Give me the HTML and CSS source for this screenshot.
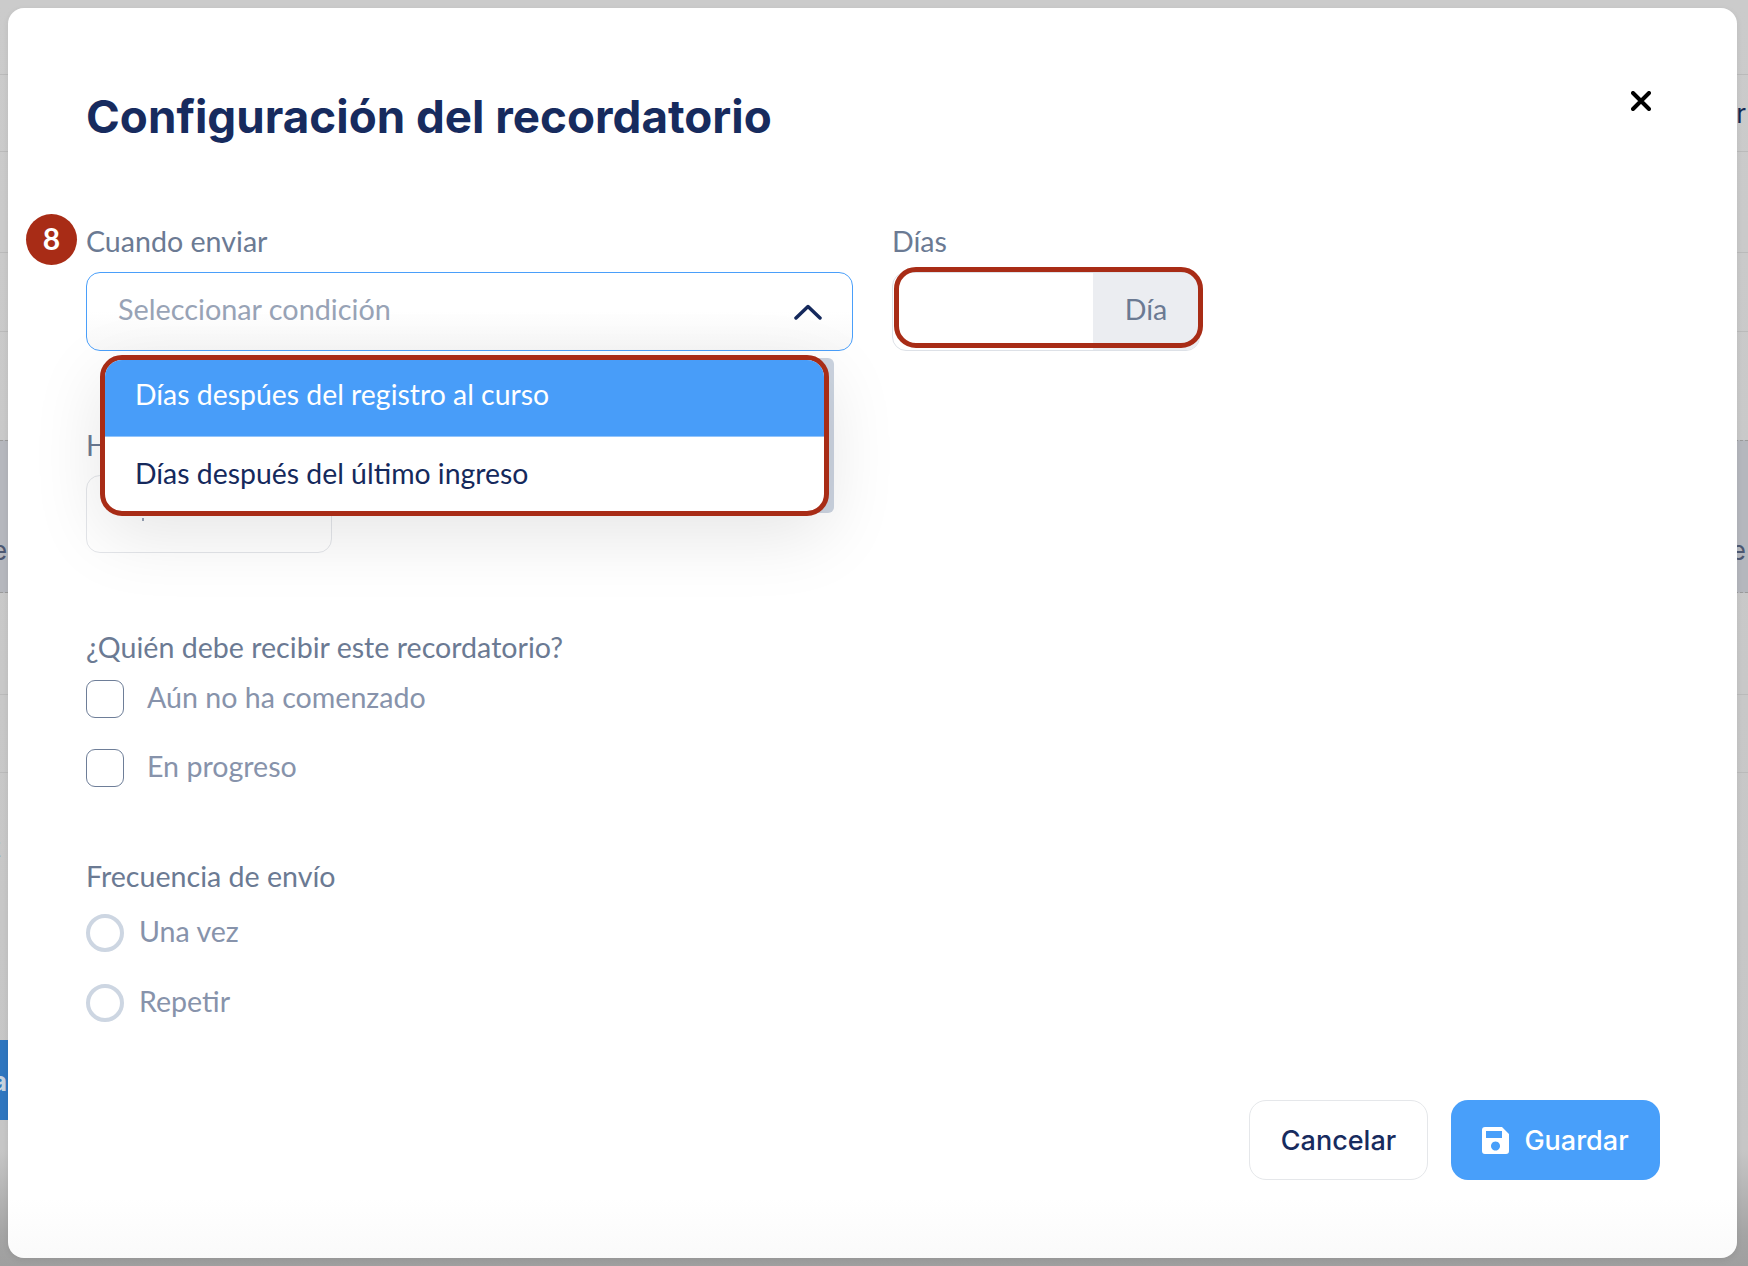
FILE: index.html
```html
<!DOCTYPE html>
<html lang="es">
<head>
    <meta charset="UTF-8">
    <meta name="viewport" content="width=device-width, initial-scale=1.0">
    <title>Configuración del recordatorio</title>
    <link rel="stylesheet" href="styles.css">
</head>
<body>
    <!-- pagina detras del modal -->
    <div class="backdrop">
        <div class="back-row row-a"></div>
        <div class="back-row row-b"><span></span><span class="back-end">r</span></div>
        <div class="back-row row-c"></div>
        <div class="back-row row-d"></div>
        <div class="back-row row-e"></div>
        <div class="back-row row-f"><span class="back-start">e</span><span class="back-end">e</span></div>
        <div class="back-row row-g"></div>
        <div class="back-row row-h"></div>
        <div class="back-row row-i"><span class="back-start">t</span></div>
        <div class="back-button">a</div>
    </div>

    <div class="modal">
        <div class="modal-header">
            <h1 class="modal-title">Configuración del recordatorio</h1>
            <svg class="close-icon" viewBox="0 0 20 20" aria-label="Cerrar">
                <path d="M2 2 L18 18 M18 2 L2 18" />
            </svg>
        </div>

        <div class="send-row">
            <div class="field field-when">
                <div class="step-badge">8</div>
                <label class="field-label">Cuando enviar</label>
                <div class="select-box">
                    <span class="select-placeholder">Seleccionar condición</span>
                    <svg class="chevron" viewBox="0 0 28 16"><path d="M2 14 L14 2.5 L26 14" /></svg>
                </div>
                <div class="dropdown-scroll"></div>
                <div class="dropdown">
                    <div class="dropdown-item active">Días despúes del registro al curso</div>
                    <div class="dropdown-item">Días después del último ingreso</div>
                </div>
            </div>
            <div class="field field-days">
                <label class="field-label">Días</label>
                <div class="days-input">
                    <div class="days-value"></div>
                    <div class="days-unit">Día</div>
                </div>
                <div class="days-mark"></div>
            </div>
        </div>

        <div class="field field-hour">
            <label class="field-label">H</label>
            <div class="hour-input"><span class="hour-dot"></span></div>
        </div>

        <div class="group group-who">
            <div class="field-label group-title">¿Quién debe recibir este recordatorio?</div>
            <div class="check-row"><span class="checkbox"></span><span class="option-text">Aún no ha comenzado</span></div>
            <div class="check-row"><span class="checkbox"></span><span class="option-text">En progreso</span></div>
        </div>

        <div class="group group-freq">
            <div class="field-label group-title">Frecuencia de envío</div>
            <div class="radio-row"><span class="radio"></span><span class="option-text">Una vez</span></div>
            <div class="radio-row"><span class="radio"></span><span class="option-text">Repetir</span></div>
        </div>

        <div class="modal-footer">
            <button class="btn btn-cancel">Cancelar</button>
            <button class="btn btn-save">
                <svg class="save-icon" viewBox="0 0 27 27">
                    <path fill-rule="evenodd" d="M3 0 H20 L27 7 V24 a3 3 0 0 1 -3 3 H3 a3 3 0 0 1 -3 -3 V3 a3 3 0 0 1 3 -3 Z M4 4 V11 H20 V4 Z M13.5 14.5 a4.5 4.5 0 1 0 0.01 0 Z" />
                </svg>
                Guardar
            </button>
        </div>
    </div>
</body>
</html>
```

FILE: styles.css
```css
* {
    box-sizing: border-box;
}
html, body {
    height: 100%;
}
body {
    margin: 0;
    overflow: hidden;
    position: relative;
    background: linear-gradient(#cbcbcb 0, #c6c6c6 1150px, #a4a4a4 1235px, #9f9f9f 100%);
    font-family: "Lato", "Liberation Sans", sans-serif;
    color: #15295c;
}

/* fondo */
.backdrop {
    height: 100%;
    font-family: "Inter", sans-serif;
    font-size: 26px;
    color: #122a55;
    display: flex;
    flex-direction: column;
}
.back-row {
    display: flex;
    justify-content: space-between;
    align-items: center;
    border-bottom: 1px solid #bababa;
    overflow: hidden;
    flex-shrink: 0;
}
.row-a { height: 75px; }
.row-b { height: 77px; }
.row-c { height: 101px; }
.row-d { height: 79px; }
.row-e { height: 108px; border-bottom: 0; }
.row-f {
    height: 153px;
    align-items: flex-end;
    padding-bottom: 26px;
    background: #b5b7bd;
    color: #4d5872;
    border-top: 1px dashed #9a9a9a;
    border-bottom: 1px dashed #9a9a9a;
}
.row-g { height: 102px; }
.row-h { height: 78px; }
.row-i { height: 148px; border-bottom: 0; }
.back-start { margin-left: -8px; }
.back-end { margin-right: 2px; }
.back-button {
    margin-top: auto;
    margin-bottom: 146px;
    width: 8px;
    height: 80px;
    background: #2f76bf;
    color: #c6d2de;
    font-weight: 700;
    line-height: 84px;
    overflow: hidden;
    text-indent: -8px;
}

/* modal */
.modal {
    position: absolute;
    left: 8px;
    top: 8px;
    width: 1729px;
    height: 1250px;
    border-radius: 16px;
    background: linear-gradient(#fff 0, #fff 1190px, #fafafa 100%);
    padding: 78px;
    display: flex;
    flex-direction: column;
    box-shadow: 0 2px 6px rgba(0, 0, 0, 0.08);
}
.modal-header {
    display: flex;
    justify-content: space-between;
    align-items: flex-start;
    height: 138px;
}
.modal-title {
    margin: 0;
    font-family: "Inter", sans-serif;
    font-size: 45.75px;
    font-weight: 700;
    line-height: 61px;
    color: #172b5e;
}
.close-icon {
    width: 20px;
    height: 20px;
    margin: 5px 8px 0 0;
    fill: none;
    stroke: #000;
    stroke-width: 4;
    stroke-linecap: round;
}

.field {
    position: relative;
}
.field-label {
    display: block;
    font-size: 28.6px;
    line-height: 34px;
    color: #6b7a93;
}
.send-row {
    display: flex;
    gap: 39px;
}
.field-when {
    width: 767px;
}
.field-days {
    width: 308px;
}
.step-badge {
    position: absolute;
    left: -60px;
    top: -10px;
    width: 51px;
    height: 51px;
    border-radius: 50%;
    background: #a82c16;
    color: #fff;
    font-size: 30px;
    font-weight: 700;
    line-height: 49px;
    text-align: center;
}
.select-box {
    margin-top: 14px;
    height: 79px;
    border: 1px solid #4a9ffa;
    border-radius: 14px;
    padding: 0 30px 0 31px;
    display: flex;
    justify-content: space-between;
    align-items: center;
    background: linear-gradient(#fff 50%, #f8f8f8);
}
.select-placeholder {
    font-size: 28.8px;
    line-height: 36px;
    margin-top: -5px;
    color: #98a3b6;
}
.chevron {
    width: 28px;
    height: 16px;
    fill: none;
    stroke: #15295c;
    stroke-width: 3.5;
    stroke-linecap: round;
    stroke-linejoin: round;
}
.dropdown-scroll {
    position: absolute;
    left: 700px;
    top: 134px;
    width: 48px;
    height: 155px;
    border-radius: 6px;
    background: #ccd4e0;
}
.dropdown {
    position: absolute;
    left: 14px;
    top: 131px;
    width: 729px;
    height: 161px;
    border: 5px solid #a82c16;
    border-radius: 22px;
    background: #fff;
    overflow: hidden;
    z-index: 2;
    box-shadow: 0 20px 70px rgba(0, 0, 0, 0.1);
}
.dropdown-item {
    height: 75px;
    padding-left: 30px;
    font-size: 28.4px;
    line-height: 72px;
    color: #15295c;
}
.dropdown-item.active {
    height: 77px;
    background: #489df9;
    border-bottom: 1px solid #92c4fb;
    line-height: 68px;
    color: #fff;
}
.days-input {
    margin-top: 14px;
    height: 79px;
    border: 1px solid #dde1e7;
    border-radius: 14px;
    display: flex;
    overflow: hidden;
}
.days-value {
    width: 200px;
}
.days-unit {
    flex: 1;
    background: #ebedf1;
    font-size: 28.6px;
    line-height: 73px;
    text-align: center;
    color: #6b7a93;
}
.days-mark {
    position: absolute;
    left: 2px;
    top: 43px;
    width: 309px;
    height: 81px;
    border: 5px solid #a82c16;
    border-radius: 22px;
}

.field-hour {
    margin-top: 77px;
}
.hour-input {
    margin-top: 13px;
    width: 246px;
    height: 78px;
    border: 1px solid #e4e6ea;
    border-radius: 14px;
    padding: 42px 0 0 55px;
}
.hour-dot {
    display: block;
    width: 2px;
    height: 3px;
    background: #98a3b6;
}

.group-title {
    margin-bottom: 16px;
}
.group-who {
    margin-top: 77px;
}
.group-freq {
    margin-top: 41px;
}
.check-row, .radio-row {
    display: flex;
    align-items: center;
    height: 38px;
    margin-bottom: 31px;
}
.radio-row {
    margin-bottom: 32px;
}
.group-freq .group-title {
    margin-bottom: 21px;
}
.checkbox {
    width: 38px;
    height: 38px;
    border: 1px solid #6e7e98;
    border-radius: 9px;
    margin-right: 23px;
}
.radio {
    width: 38px;
    height: 38px;
    border: 4px solid #cdd6e2;
    border-radius: 50%;
    margin-right: 15px;
}
.option-text {
    font-size: 28.6px;
    line-height: 36px;
    margin-top: -5px;
    color: #8793ab;
}

.modal-footer {
    margin-top: auto;
    display: flex;
    justify-content: flex-end;
    gap: 23px;
}
.btn {
    height: 80px;
    border-radius: 17px;
    font-family: "Inter", sans-serif;
    font-size: 27px;
    font-weight: 500;
    display: flex;
    align-items: center;
    justify-content: center;
}
.btn-cancel {
    width: 179px;
    background: #fff;
    border: 1.5px solid #e5e7ea;
    color: #172b5e;
}
.btn-save {
    width: 209px;
    margin-right: -1px;
    background: #489ffa;
    border: 0;
    color: #fff;
    gap: 15px;
}
.save-icon {
    width: 27px;
    height: 27px;
    fill: #fff;
}
```
